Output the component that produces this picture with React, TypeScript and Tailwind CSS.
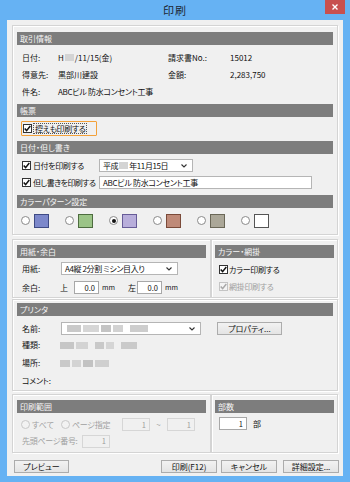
import type { ReactNode } from 'react';

const Check = ({ checked = true, disabled = false }: { checked?: boolean; disabled?: boolean }) => (
  <span
    className={
      disabled
        ? 'w-[9px] h-[9px] border border-[#c4c4c4] bg-[#f4f4f4] flex items-center justify-center shrink-0'
        : 'w-[9px] h-[9px] border border-[#333333] bg-white flex items-center justify-center shrink-0'
    }
  >
    {checked && (
      <svg width="7" height="7" viewBox="0 0 7 7">
        <path
          d="M0.7 3.5 L2.6 5.6 L6.3 1"
          fill="none"
          stroke={disabled ? '#a8a8a8' : '#111111'}
          strokeWidth="1.5"
        />
      </svg>
    )}
  </span>
);

const Radio = ({ on = false, disabled = false }: { on?: boolean; disabled?: boolean }) => (
  <span
    className={
      disabled
        ? 'w-[9px] h-[9px] rounded-full border border-[#c8c8c8] bg-[#f2f2f2] flex items-center justify-center shrink-0'
        : 'w-[9px] h-[9px] rounded-full border border-[#8a8a8a] bg-white flex items-center justify-center shrink-0'
    }
  >
    {on && <span className="w-[4px] h-[4px] rounded-full bg-[#111111]" />}
  </span>
);

const Bar = ({ children }: { children: ReactNode }) => (
  <div className="h-[13px] bg-[#7d7d7d] text-[#f6f6f6] text-[8px] leading-[13px] pl-[3px]">{children}</div>
);

const Panel = ({ className, children }: { className: string; children: ReactNode }) => (
  <div className={'border border-[#d4d4d4] shadow-[inset_1px_1px_0_#ffffff,1px_1px_0_#ffffff] ' + className}>
    {children}
  </div>
);

const Chevron = () => (
  <svg width="6" height="4" viewBox="0 0 6 4" className="shrink-0">
    <path d="M0.5 0.5 L3 3 L5.5 0.5" fill="none" stroke="#333333" strokeWidth="1.1" />
  </svg>
);

const Select = ({ w, children }: { w: string; children: ReactNode }) => (
  <div className={w + ' h-[13px] bg-white border border-[#b5b5b5] flex items-center pl-[3px] pr-[5px] shrink-0'}>
    <span className="flex-1 flex items-center tracking-[-0.4px]">{children}</span>
    <Chevron />
  </div>
);

const NumBox = ({ w, value, disabled = false }: { w: string; value: string; disabled?: boolean }) => (
  <div
    className={
      w +
      (disabled
        ? ' h-[13px] bg-[#f0f0f0] border border-[#d6d6d6] text-[#9c9c9c]'
        : ' h-[13px] bg-white border border-[#a8a8a8]') +
      ' flex items-center justify-end pr-[3px] text-[7.5px] shrink-0'
    }
  >
    {value}
  </div>
);

const Btn = ({ w, children }: { w: string; children: ReactNode }) => (
  <div
    className={
      w +
      ' h-[13px] border border-[#acacac] bg-gradient-to-b from-[#f2f2f2] to-[#e4e4e4] flex items-center justify-center text-[8px]'
    }
  >
    {children}
  </div>
);

const Blur = ({ w, shade }: { w: string; shade: string }) => <span className={w + ' h-[7px] ' + shade} />;

const swatches = [
  { fill: 'bg-[#7c88cb]', line: 'border-[#3f4b85]', on: false },
  { fill: 'bg-[#9bc487]', line: 'border-[#4d6c3f]', on: false },
  { fill: 'bg-[#b8aedb]', line: 'border-[#675c98]', on: true },
  { fill: 'bg-[#bf8a78]', line: 'border-[#7a4a39]', on: false },
  { fill: 'bg-[#aba798]', line: 'border-[#6a6757]', on: false },
  { fill: 'bg-white', line: 'border-[#555555]', on: false },
];

export default function App() {
  return (
    <div className="w-[350px] h-[482px] bg-[#66b2f3] flex flex-col font-['Noto_Sans_CJK_JP','Noto_Sans',sans-serif] [font-feature-settings:'palt'] text-[#111111] text-[8px] leading-none whitespace-nowrap">
      {/* title bar */}
      <div className="h-[20px] relative flex items-center justify-center">
        <span className="text-[11px] text-[#1d2733] tracking-[1px]">印刷</span>
        <div className="absolute top-0 right-[5px] w-[20px] h-[14px] bg-[#c8504f] flex items-center justify-center">
          <svg width="6" height="6" viewBox="0 0 6 6">
            <path d="M0.5 0.5 L5.5 5.5 M5.5 0.5 L0.5 5.5" stroke="#ffffff" strokeWidth="1.4" />
          </svg>
        </div>
      </div>

      {/* body */}
      <div className="mx-[7px] h-[456px] bg-[#f0f0f0] px-[5px] pt-[5px] flex flex-col">
        {/* 取引情報 etc */}
        <Panel className="px-[4px] pt-[6px] pb-[6px] flex flex-col">
          <Bar>取引情報</Bar>
          <div className="mt-[4px] pl-[5px] flex flex-col">
            <div className="h-[17px] flex items-center">
              <span className="w-[36px]">日付:</span>
              <span className="w-[110px] flex items-center">
                H<span className="w-[9px] h-[7px] bg-[#d4d4d4] mx-[1px]" />/11/15(金)
              </span>
              <span className="w-[62px]">請求書No.:</span>
              <span>15012</span>
            </div>
            <div className="h-[17px] flex items-center">
              <span className="w-[36px]">得意先:</span>
              <span className="w-[110px]">黒部川建設</span>
              <span className="w-[62px]">金額:</span>
              <span>2,283,750</span>
            </div>
            <div className="h-[17px] flex items-center">
              <span className="w-[36px]">件名:</span>
              <span className="tracking-[-0.3px]">ABCビル 防水コンセント工事</span>
            </div>
          </div>

          <div className="mt-[4px]">
            <Bar>帳票</Bar>
          </div>
          <div className="mt-[4px] ml-[4px] w-[76px] h-[15px] border border-[#f3a13a] rounded-[1px] flex items-center pl-[1px]">
            <Check />
            <span className="ml-[1px] px-[1px] h-[11px] flex items-center border border-dotted border-[#555555] tracking-[-0.4px]">
              控えも印刷する
            </span>
          </div>

          <div className="mt-[5px]">
            <Bar>日付・但し書き</Bar>
          </div>
          <div className="mt-[5px] pl-[5px] h-[13px] flex items-center">
            <Check />
            <span className="ml-[2px] w-[66px] tracking-[-0.4px]">日付を印刷する</span>
            <Select w="w-[94px]">
              平成<span className="w-[9px] h-[7px] bg-[#d4d4d4] mx-[1px]" />年11月15日
            </Select>
          </div>
          <div className="mt-[4px] pl-[5px] h-[13px] flex items-center">
            <Check />
            <span className="ml-[2px] w-[66px] tracking-[-0.55px]">但し書きを印刷する</span>
            <div className="w-[213px] h-[13px] bg-white border border-[#b5b5b5] flex items-center pl-[3px] shrink-0 tracking-[-0.3px]">
              ABCビル 防水コンセント工事
            </div>
          </div>

          <div className="mt-[6px]">
            <Bar>カラーパターン設定</Bar>
          </div>
          <div className="mt-[5px] pl-[4px] h-[15px] flex items-center gap-[16px]">
            {swatches.map((s, i) => (
              <div key={i} className="flex items-center gap-[4px]">
                <Radio on={s.on} />
                <span className={'w-[15px] h-[14px] border ' + s.fill + ' ' + s.line} />
              </div>
            ))}
          </div>
        </Panel>

        {/* 用紙・余白 / カラー・網掛 */}
        <div className="mt-[4px] flex">
          <Panel className="w-[199px] px-[4px] pt-[5px] pb-[3px] flex flex-col">
            <Bar>用紙・余白</Bar>
            <div className="mt-[4px] pl-[5px] h-[13px] flex items-center">
              <span className="w-[39px]">用紙:</span>
              <Select w="w-[117px]">A4縦 2分割 ミシン目入り</Select>
            </div>
            <div className="mt-[6px] pl-[5px] h-[13px] flex items-center">
              <span className="w-[38px]">余白:</span>
              <span className="w-[14px]">上</span>
              <NumBox w="w-[25px]" value="0.0" />
              <span className="ml-[3px] w-[26px] text-[7px]">mm</span>
              <span className="w-[9px]">左</span>
              <NumBox w="w-[25px]" value="0.0" />
              <span className="ml-[3px] text-[7px]">mm</span>
            </div>
          </Panel>
          <Panel className="flex-1 px-[3px] pt-[5px] flex flex-col">
            <Bar>カラー・網掛</Bar>
            <div className="mt-[4px] pl-[4px] h-[15px] flex items-center">
              <Check />
              <span className="ml-[1px] tracking-[-0.3px]">カラー印刷する</span>
            </div>
            <div className="mt-[2px] pl-[4px] h-[15px] flex items-center text-[#a0a0a0]">
              <Check disabled />
              <span className="ml-[1px] tracking-[-0.3px]">網掛印刷する</span>
            </div>
          </Panel>
        </div>

        {/* プリンタ */}
        <Panel className="mt-[1px] px-[4px] pt-[3px] flex flex-col">
          <Bar>プリンタ</Bar>
          <div className="mt-[6px] pl-[5px] h-[13px] flex items-center">
            <span className="w-[39px]">名前:</span>
            <Select w="w-[140px]">
              <span className="flex items-center gap-[2px] blur-[0.6px] ml-[2px]">
                <Blur w="w-[14px]" shade="bg-[#c9c9c9]" />
                <Blur w="w-[16px]" shade="bg-[#d6d6d6]" />
                <Blur w="w-[10px]" shade="bg-[#c4c4c4]" />
                <Blur w="w-[10px]" shade="bg-[#d2d2d2]" />
                <span className="w-[3px]" />
                <Blur w="w-[18px]" shade="bg-[#cdcdcd]" />
              </span>
            </Select>
            <div className="ml-[16px]">
              <Btn w="w-[65px]">プロパティ...</Btn>
            </div>
          </div>
          <div className="mt-[1px] pl-[5px] h-[18px] flex items-center">
            <span className="w-[38px]">種類:</span>
            <span className="flex items-center gap-[2px] blur-[0.6px]">
              <Blur w="w-[14px]" shade="bg-[#c6c6c6]" />
              <Blur w="w-[12px]" shade="bg-[#d3d3d3]" />
              <span className="w-[3px]" />
              <Blur w="w-[9px]" shade="bg-[#c9c9c9]" />
              <Blur w="w-[8px]" shade="bg-[#d5d5d5]" />
              <span className="w-[3px]" />
              <Blur w="w-[16px]" shade="bg-[#cacaca]" />
            </span>
          </div>
          <div className="pl-[5px] h-[18px] flex items-center">
            <span className="w-[38px]">場所:</span>
            <span className="flex items-center gap-[2px] blur-[0.6px]">
              <Blur w="w-[10px]" shade="bg-[#c9c9c9]" />
              <Blur w="w-[9px]" shade="bg-[#d3d3d3]" />
              <Blur w="w-[10px]" shade="bg-[#c2c2c2]" />
              <Blur w="w-[14px]" shade="bg-[#cfcfcf]" />
            </span>
          </div>
          <div className="pl-[5px] h-[18px] flex items-center">
            <span className="tracking-[-0.3px]">コメント:</span>
          </div>
        </Panel>

        {/* 印刷範囲 / 部数 */}
        <div className="mt-[3px] flex">
          <Panel className="w-[199px] px-[4px] pt-[5px] pb-[4px] flex flex-col text-[#a0a0a0]">
            <Bar>印刷範囲</Bar>
            <div className="mt-[5px] pl-[4px] h-[13px] flex items-center">
              <Radio disabled />
              <span className="ml-[2px] w-[29px]">すべて</span>
              <Radio disabled />
              <span className="ml-[2px] w-[50px] tracking-[-0.3px]">ページ指定</span>
              <NumBox w="w-[28px]" value="1" disabled />
              <span className="w-[17px] text-center">~</span>
              <NumBox w="w-[28px]" value="1" disabled />
            </div>
            <div className="mt-[3px] pl-[5px] h-[14px] flex items-center">
              <span className="w-[60px] tracking-[-0.3px]">先頭ページ番号:</span>
              <NumBox w="w-[28px]" value="1" disabled />
            </div>
          </Panel>
          <Panel className="flex-1 px-[3px] pt-[5px] flex flex-col">
            <Bar>部数</Bar>
            <div className="mt-[4px] pl-[4px] h-[13px] flex items-center">
              <NumBox w="w-[28px]" value="1" />
              <span className="ml-[6px]">部</span>
            </div>
          </Panel>
        </div>

        {/* buttons */}
        <div className="mt-[7px] pl-[2px] flex items-center">
          <Btn w="w-[55px]">プレビュー</Btn>
          <div className="ml-auto flex items-center">
            <Btn w="w-[56px]">印刷(F12)</Btn>
            <div className="ml-[4px]">
              <Btn w="w-[56px]">キャンセル</Btn>
            </div>
            <div className="ml-[6px] mr-[-1px]">
              <Btn w="w-[56px]">詳細設定...</Btn>
            </div>
          </div>
        </div>
      </div>
    </div>
  );
}
